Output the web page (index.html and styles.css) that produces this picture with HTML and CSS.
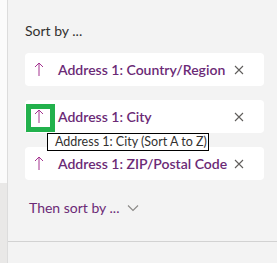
FILE: index.html
```html
<!DOCTYPE html>
<html>
<head>
<meta charset="utf-8">
<link rel="stylesheet" href="styles.css">
</head>
<body>
<div class="strip"><div class="strip-top"></div><div class="strip-bottom"></div></div>
<div class="panel">
  <div class="content">
    <div class="label">Sort by ...</div>
    <div class="card">
      <span class="arrow"><svg width="10" height="15" viewBox="0 0 10 15"><path d="M5 1V14M1 5L5 1L9 5" stroke="#a4338f" stroke-width="1" fill="none"/></svg></span>
      <span class="name">Address 1: Country/Region</span>
      <span class="close"><svg width="10" height="10" viewBox="0 0 10 10"><path d="M1 1L9 9M9 1L1 9" stroke="#605e5c" stroke-width="1.1" fill="none"/></svg></span>
    </div>
    <div class="card">
      <span class="arrow"><svg width="10" height="15" viewBox="0 0 10 15"><path d="M5 1V14M1 5L5 1L9 5" stroke="#a4338f" stroke-width="1" fill="none"/></svg></span>
      <span class="name">Address 1: City</span>
      <span class="close"><svg width="10" height="10" viewBox="0 0 10 10"><path d="M1 1L9 9M9 1L1 9" stroke="#605e5c" stroke-width="1.1" fill="none"/></svg></span>
      <span class="focus"></span>
      <span class="tooltip">Address 1: City (Sort A to Z)</span>
    </div>
    <div class="card">
      <span class="arrow"><svg width="10" height="15" viewBox="0 0 10 15"><path d="M5 1V14M1 5L5 1L9 5" stroke="#a4338f" stroke-width="1" fill="none"/></svg></span>
      <span class="name">Address 1: ZIP/Postal Code</span>
      <span class="close"><svg width="10" height="10" viewBox="0 0 10 10"><path d="M1 1L9 9M9 1L1 9" stroke="#605e5c" stroke-width="1.1" fill="none"/></svg></span>
    </div>
    <div class="then">Then sort by ... <svg width="12" height="8" viewBox="0 0 12 8"><path d="M1 1.5L6 6.5L11 1.5" stroke="#8a8886" stroke-width="1.1" fill="none"/></svg></div>
  </div>
  <div class="footer"></div>
</div>
</body>
</html>
```
FILE: styles.css
```css
html, body { margin: 0; padding: 0; }
body {
  width: 277px;
  height: 263px;
  overflow: hidden;
  display: flex;
  font-family: Lato, "Noto Sans", sans-serif;
  background: #f3f3f3;
}
.strip {
  width: 7px;
  display: flex;
  flex-direction: column;
  border-right: 1px solid #dcdcdc;
}
.strip-top { height: 183px; background: #fbfbfb; }
.strip-bottom { flex: 1; background: #e9e8e7; }
.panel {
  flex: 1;
  display: flex;
  flex-direction: column;
}
.content {
  height: 242px;
  padding: 21px 13px 0 17px;
  box-sizing: border-box;
  border-bottom: 1px solid #d2d2d2;
}
.label {
  font-size: 14px;
  line-height: 20px;
  color: #323130;
  margin-bottom: 12px;
}
.card {
  position: relative;
  height: 33px;
  background: #fff;
  border-radius: 4px;
  display: flex;
  align-items: center;
  padding-left: 9px;
  box-sizing: border-box;
  margin-bottom: 14px;
}
.arrow {
  width: 24px;
  display: flex;
  align-items: center;
}
.name {
  flex: 1;
  color: #6b2a76;
  font-size: 14px;
  font-weight: 600;
  line-height: 20px;
  white-space: nowrap;
}
.close {
  width: 30px;
  display: flex;
  align-items: center;
}
.focus {
  position: absolute;
  left: 1px;
  top: 4px;
  width: 29px;
  height: 28px;
  border: 5px solid #22b14c;
  box-sizing: border-box;
}
.tooltip {
  position: absolute;
  left: 22px;
  top: 33px;
  width: 162px;
  height: 18px;
  box-sizing: border-box;
  border: 1px solid #000;
  background: #fff;
  font-size: 12.5px;
  line-height: 16px;
  padding-left: 7px;
  color: #323130;
  z-index: 2;
  white-space: nowrap;
}
.then {
  margin-top: 18px;
  padding-left: 4px;
  font-size: 14px;
  line-height: 20px;
  color: #6b2a76;
  display: flex;
  align-items: center;
  gap: 8px;
}
.footer { flex: 1; }
```
